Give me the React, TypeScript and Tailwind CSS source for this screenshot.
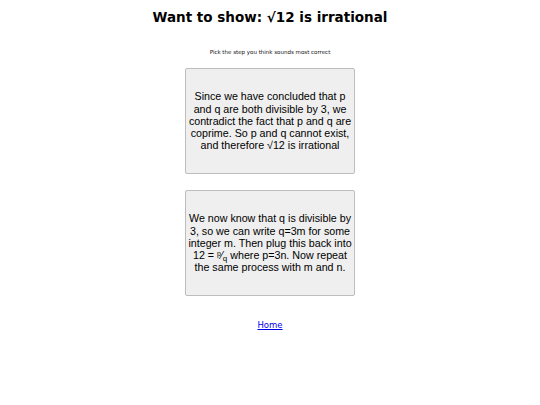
import React from "react";

const Frac = () => (
  <>
    <span className="relative -top-[3px] text-[7px] leading-none">p</span>⁄
    <span className="relative top-[2px] text-[8px] leading-none">q</span>
  </>
);

const choices: { id: string; lines: React.ReactNode[] }[] = [
  {
    id: "a",
    lines: [
      "Since we have concluded that p",
      "and q are both divisible by 3, we",
      "contradict the fact that p and q are",
      "coprime. So p and q cannot exist,",
      "and therefore √12 is irrational",
    ],
  },
  {
    id: "b",
    lines: [
      "We now know that q is divisible by",
      "3, so we can write q=3m for some",
      "integer m. Then plug this back into",
      <>
        12 = <Frac /> where p=3n. Now repeat
      </>,
      "the same process with m and n.",
    ],
  },
];

const App = () => {
  return (
    <div className="w-[540px] h-[405px] bg-white flex flex-col items-center text-black">
      <h1 className="mt-[8px] text-[13.5px] font-bold leading-[18px] font-['DejaVu_Sans',sans-serif]">
        Want to show: √12 is irrational
      </h1>

      <p className="mt-[22px] text-[5.5px] leading-[8px] text-[#111] font-['DejaVu_Sans',sans-serif]">
        Pick the step you think sounds most correct
      </p>

      <div className="mt-[12px] flex flex-col gap-[16px]">
        {choices.map((c) => (
          <button
            key={c.id}
            className="w-[170px] h-[106px] flex items-center justify-center px-0 bg-[#efefef] border border-[#bdbdbd] rounded-[2px] text-[10.7px] leading-[12.3px] text-center font-['Liberation_Sans',Arial,sans-serif]"
          >
            <span className="w-[180px] shrink-0 flex flex-col items-center whitespace-nowrap">
              {c.lines.map((l, i) => (
                <span key={i}>{l}</span>
              ))}
            </span>
          </button>
        ))}
      </div>

      <a
        href="#"
        className="mt-[23px] text-[8.5px] leading-[12px] text-[#0000ee] underline font-['DejaVu_Sans',sans-serif]"
      >
        Home
      </a>
    </div>
  );
};

export default App;
